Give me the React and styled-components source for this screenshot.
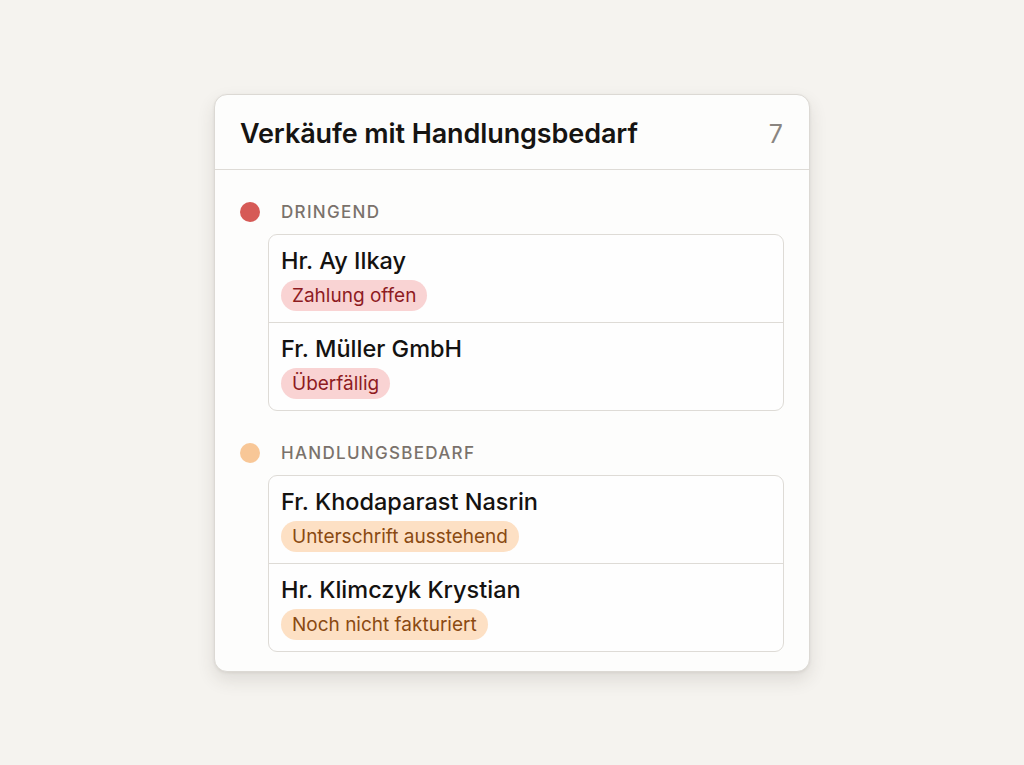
import React from 'react';
import styled, { createGlobalStyle } from 'styled-components';

const GlobalStyle = createGlobalStyle`
  html, body {
    margin: 0;
    padding: 0;
    background: #f5f3ef;
  }
  body {
    font-family: Inter, "Noto Sans", "Liberation Sans", sans-serif;
    -webkit-font-smoothing: antialiased;
  }
`;

const sections = [
  {
    label: 'DRINGEND',
    tone: 'red',
    items: [
      { name: 'Hr. Ay Ilkay', status: 'Zahlung offen' },
      { name: 'Fr. Müller GmbH', status: 'Überfällig' },
    ],
  },
  {
    label: 'HANDLUNGSBEDARF',
    tone: 'orange',
    items: [
      { name: 'Fr. Khodaparast Nasrin', status: 'Unterschrift ausstehend' },
      { name: 'Hr. Klimczyk Krystian', status: 'Noch nicht fakturiert' },
    ],
  },
];

const tones = {
  red: { dot: '#d65a56', bg: '#f9d3d3', fg: '#8e1b1f' },
  orange: { dot: '#f8c797', bg: '#fde0c4', fg: '#8a4a12' },
};

const Page = styled.div`
  min-height: 765px;
  display: flex;
  justify-content: center;
  padding-top: 94px;
  box-sizing: border-box;
`;

const Card = styled.div`
  width: 596px;
  height: 578px;
  box-sizing: border-box;
  background: #fdfdfc;
  border: 1px solid #dcd9d4;
  border-radius: 13px;
  box-shadow: 0 8px 18px rgba(60, 50, 40, 0.12), 0 1px 3px rgba(60, 50, 40, 0.08);
  overflow: hidden;
`;

const Header = styled.div`
  height: 75px;
  box-sizing: border-box;
  display: flex;
  align-items: center;
  justify-content: space-between;
  padding: 3px 26px 0 25px;
  border-bottom: 1px solid #dedbd6;
`;

const Title = styled.h2`
  margin: 0;
  font-size: 27px;
  font-weight: 600;
  color: #161412;
  letter-spacing: -0.1px;
`;

const Count = styled.span`
  font-size: 25px;
  font-weight: 400;
  color: #8a8580;
`;

const Body = styled.div`
  padding: 30px 25px 0 25px;
  display: flex;
  flex-direction: column;
  gap: 30px;
`;

const Section = styled.div`
  display: flex;
  flex-direction: column;
  gap: 10px;
`;

const SectionHead = styled.div`
  display: flex;
  align-items: center;
  gap: 21px;
  height: 24px;
`;

const Dot = styled.span`
  width: 20px;
  height: 20px;
  border-radius: 50%;
  background: ${p => tones[p.tone].dot};
`;

const Label = styled.span`
  font-size: 17px;
  font-weight: 500;
  letter-spacing: 1.3px;
  color: #7a726b;
`;

const List = styled.div`
  margin-left: 28px;
  border: 1px solid #dedbd6;
  border-radius: 9px;
  background: #fefefe;
`;

const Row = styled.div`
  padding: 12px 12px 0 12px;
  height: 75px;
  display: flex;
  flex-direction: column;
  align-items: flex-start;
  gap: 5px;
  & + & {
    border-top: 1px solid #dedbd6;
  }
`;

const Name = styled.div`
  font-size: 23.5px;
  font-weight: 500;
  line-height: 28px;
  color: #141210;
`;

const Pill = styled.span`
  display: inline-flex;
  align-items: center;
  height: 31px;
  padding: 0 11px;
  border-radius: 16px;
  font-size: 19px;
  background: ${p => tones[p.tone].bg};
  color: ${p => tones[p.tone].fg};
`;

export default function App() {
  return (
    <>
      <GlobalStyle />
      <Page>
        <Card>
          <Header>
            <Title>Verkäufe mit Handlungsbedarf</Title>
            <Count>7</Count>
          </Header>
          <Body>
            {sections.map(section => (
              <Section key={section.label}>
                <SectionHead>
                  <Dot tone={section.tone} />
                  <Label>{section.label}</Label>
                </SectionHead>
                <List>
                  {section.items.map(item => (
                    <Row key={item.name}>
                      <Name>{item.name}</Name>
                      <Pill tone={section.tone}>{item.status}</Pill>
                    </Row>
                  ))}
                </List>
              </Section>
            ))}
          </Body>
        </Card>
      </Page>
    </>
  );
}
